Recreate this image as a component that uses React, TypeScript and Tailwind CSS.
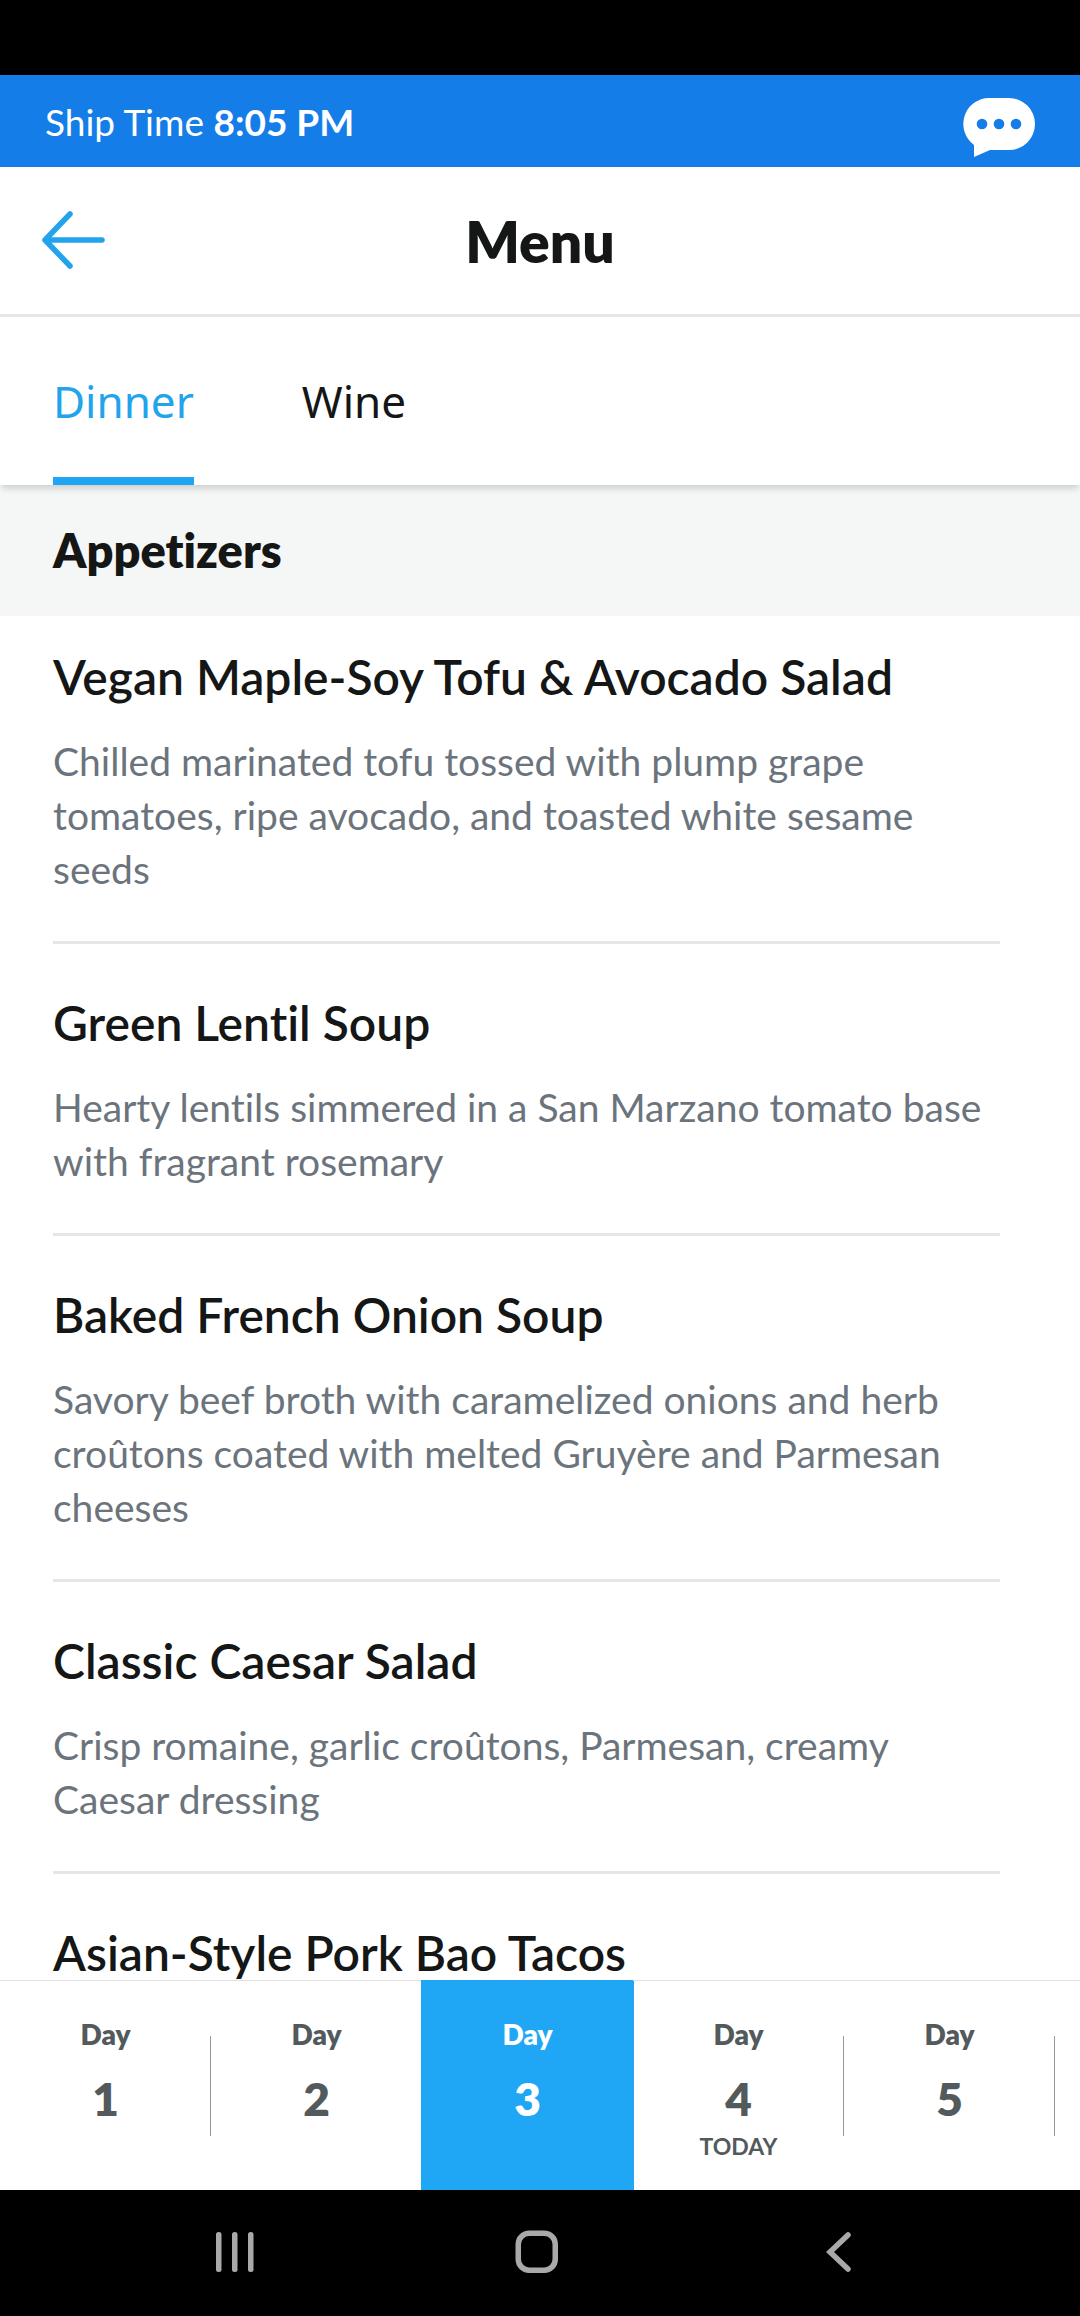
import { useState } from 'react'

interface MenuItem {
  name: string
  description?: string
}

interface Day {
  number: number
  isToday?: boolean
}

const TABS = ['Dinner', 'Wine']

const APPETIZERS: MenuItem[] = [
  {
    name: 'Vegan Maple-Soy Tofu & Avocado Salad',
    description: 'Chilled marinated tofu tossed with plump grape tomatoes, ripe avocado, and toasted white sesame seeds'
  },
  {
    name: 'Green Lentil Soup',
    description: 'Hearty lentils simmered in a San Marzano tomato base with fragrant rosemary'
  },
  {
    name: 'Baked French Onion Soup',
    description: 'Savory beef broth with caramelized onions and herb croûtons coated with melted Gruyère and Parmesan cheeses'
  },
  {
    name: 'Classic Caesar Salad',
    description: 'Crisp romaine, garlic croûtons, Parmesan, creamy Caesar dressing'
  },
  {
    name: 'Asian-Style Pork Bao Tacos'
  }
]

const DAYS: Day[] = [
  { number: 1 },
  { number: 2 },
  { number: 3 },
  { number: 4, isToday: true },
  { number: 5 }
]

function ShipTimeBar() {
  return (
    <div className="bg-[#147de8] h-[92px] shrink-0 px-[45px] flex items-center justify-between text-white">
      <p className="pt-0.5 text-[37px] leading-[48px]">
        Ship Time <span className="font-bold">8:05 PM</span>
      </p>
      <button type="button" aria-label="Open chat" className="pt-3">
        <svg width="72" height="60" viewBox="0 0 72 60" fill="none">
          <path
            d="M26 1h20a26 26 0 0 1 0 52H27L11 60V48A26 26 0 0 1 26 1Z"
            fill="white"
          />
          <circle cx="19" cy="27" r="5.3" fill="#147de8" />
          <circle cx="36" cy="27" r="5.3" fill="#147de8" />
          <circle cx="53" cy="27" r="5.3" fill="#147de8" />
        </svg>
      </button>
    </div>
  )
}

function Header() {
  return (
    <header className="h-[150px] shrink-0 border-b-3 border-[#e6e6e6] px-[42px] grid grid-cols-[64px_1fr_64px] items-center">
      <button type="button" aria-label="Back" className="pb-0.5">
        <svg width="64" height="58" viewBox="0 0 64 58" fill="none" stroke="#22a4ec" strokeWidth="5.5" strokeLinecap="round" strokeLinejoin="round">
          <path d="M28 3 3 29l25 26M3 29h57" />
        </svg>
      </button>
      <h1 className="text-[57px] leading-[64px] font-extrabold text-center">Menu</h1>
    </header>
  )
}

function CourseTabs() {
  const [selected, setSelected] = useState('Dinner')

  return (
    <nav className="h-[168px] shrink-0 px-[53px] flex gap-[108px] relative shadow-[0_6px_6px_-2px_rgba(0,0,0,0.15)] font-['Noto_Sans',sans-serif]">
      {TABS.map((tab) => (
        <button
          key={tab}
          type="button"
          onClick={() => setSelected(tab)}
          className={
            tab === selected
              ? 'text-[44px] border-y-8 border-t-transparent border-b-[#1fa5f2] text-[#22a4ec]'
              : 'text-[44px] border-y-8 border-transparent'
          }
        >
          {tab}
        </button>
      ))}
    </nav>
  )
}

function MenuItemRow({ item }: { item: MenuItem }) {
  return (
    <li className="pt-[51px] pb-[45px] first:pt-[33px] border-b-3 border-[#e6e6e6]">
      <h3 className="text-[48px] leading-[56px] font-semibold">{item.name}</h3>
      {item.description && (
        <p className="mt-[29px] text-[39px] leading-[54px] text-[#6b747c]">{item.description}</p>
      )}
    </li>
  )
}

function DayPicker() {
  const [selected, setSelected] = useState(3)

  return (
    <div className="h-[210px] shrink-0 flex bg-white text-[#535a5c]">
      {DAYS.map((day) => (
        <button
          key={day.number}
          type="button"
          onClick={() => setSelected(day.number)}
          className={
            day.number === selected
              ? 'w-[213px] -mx-px shrink-0 flex items-center border-t border-[#1fa7f5] bg-[#1fa7f5] text-white'
              : 'w-[211px] shrink-0 flex items-center border-t border-[#e2e2e2]'
          }
        >
          <span className="flex-1 h-[160px] flex flex-col items-center font-extrabold">
            <span className="text-[28px] leading-[56px]">Day</span>
            <span className="text-[46px] leading-[74px]">{day.number}</span>
            {day.isToday && <span className="text-[23px] leading-5 font-bold">TODAY</span>}
          </span>
          {day.number !== selected && day.number + 1 !== selected && (
            <span className="w-px -ml-px h-[100px] bg-[#95999b]" />
          )}
        </button>
      ))}
      <div className="flex-1 border-t border-[#e2e2e2]" />
    </div>
  )
}

function SystemNavigation() {
  return (
    <div className="h-[126px] shrink-0 bg-black pl-[84px] pr-[90px] pb-0.5 grid grid-cols-3 items-center justify-items-center">
      <button type="button" aria-label="Recent apps">
        <svg width="38" height="40" viewBox="0 0 38 40" fill="#a9a9a9">
          <rect width="5.5" height="40" rx="2.5" />
          <rect x="16" width="5.5" height="40" rx="2.5" />
          <rect x="32" width="5.5" height="40" rx="2.5" />
        </svg>
      </button>
      <button type="button" aria-label="Home">
        <svg width="44" height="44" viewBox="0 0 44 44" fill="none" stroke="#a9a9a9" strokeWidth="5.5">
          <rect x="3.25" y="3.25" width="37" height="37" rx="11" />
        </svg>
      </button>
      <button type="button" aria-label="Back to previous screen">
        <svg width="26" height="40" viewBox="0 0 26 40" fill="none" stroke="#a9a9a9" strokeWidth="5.5" strokeLinecap="round">
          <path d="M22 3 4 20l18 17" />
        </svg>
      </button>
    </div>
  )
}

export default function App() {
  return (
    <div className="h-screen flex flex-col bg-white text-[#151616] font-['Lato',sans-serif] [font-variant-ligatures:none]">
      <div className="h-[75px] shrink-0 bg-black" />
      <ShipTimeBar />
      <Header />
      <CourseTabs />
      <main className="flex-1 min-h-0 overflow-hidden">
        <h2 className="bg-[#f5f7f6] h-[131px] px-[53px] flex items-center text-[47px] font-extrabold">Appetizers</h2>
        <ul className="pl-[53px] pr-20">
          {APPETIZERS.map((item) => (
            <MenuItemRow key={item.name} item={item} />
          ))}
        </ul>
      </main>
      <DayPicker />
      <SystemNavigation />
    </div>
  )
}
